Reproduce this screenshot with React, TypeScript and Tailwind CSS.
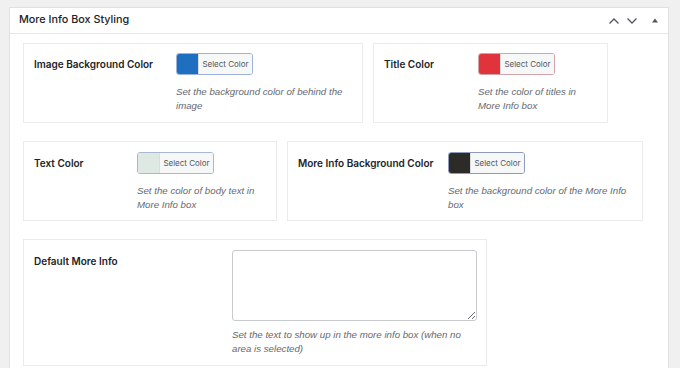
import React from "react";

const font = { fontFamily: "Inter, 'Helvetica Neue', Arial, sans-serif" };
const descFont = { fontFamily: "'Liberation Sans', Arial, sans-serif" };

function ColorButton({ color, border }: { color: string; border: string }) {
  return (
    <div
      className="flex h-[22px] w-[77px] overflow-hidden rounded-[3px] border"
      style={{ borderColor: border }}
    >
      <div className="w-[21px] h-full" style={{ backgroundColor: color }} />
      <div className="flex-1 flex items-center justify-center bg-[#f6f7f7] border-l border-[#dcdcde] text-[8px] text-[#50575e]">
        Select Color
      </div>
    </div>
  );
}

function Desc({ lines, mt = "mt-[10px]" }: { lines: string[]; mt?: string }) {
  return (
    <p
      className={`${mt} whitespace-nowrap text-[9.7px] leading-[14px] italic text-[#646970]`}
      style={descFont}
    >
      {lines.map((l, i) => (
        <span key={i} className="block">
          {l}
        </span>
      ))}
    </p>
  );
}

function ColorBox({
  width,
  labelW,
  label,
  color,
  border,
  lines,
  pt,
}: {
  width: number;
  labelW: number;
  label: string;
  color: string;
  border: string;
  lines: string[];
  pt: string;
}) {
  return (
    <div
      className={`flex h-[80px] border border-[#ebebeb] bg-white pl-[10px] pr-[9px] ${pt}`}
      style={{ width }}
    >
      <div
        className="shrink-0 text-[10px] font-semibold leading-[22px] text-[#1d2327]"
        style={{ width: labelW }}
      >
        {label}
      </div>
      <div className="flex-1 min-w-0">
        <ColorButton color={color} border={border} />
        <Desc lines={lines} />
      </div>
    </div>
  );
}

export default function App() {
  return (
    <div className="h-[368px] w-[680px] overflow-hidden bg-[#f0f0f1] pt-[7px] pl-[9px]" style={font}>
      <div className="w-[660px] h-[400px] border border-[#e0e0e0] bg-white">
        <div className="flex h-[26px] items-center justify-between border-b border-[#e8e8e8] pl-[9px] pr-[8px]">
          <span className="text-[10.8px] font-medium text-[#1d2327]">More Info Box Styling</span>
          <div className="flex items-center">
            <svg width="12" height="8" viewBox="0 0 12 8" className="mr-[6px]">
              <path d="M1.5 6.5 L6 2 L10.5 6.5" fill="none" stroke="#50575e" strokeWidth="1.3" />
            </svg>
            <svg width="12" height="8" viewBox="0 0 12 8" className="mr-[14px]">
              <path d="M1.5 1.5 L6 6 L10.5 1.5" fill="none" stroke="#50575e" strokeWidth="1.3" />
            </svg>
            <svg width="6" height="5" viewBox="0 0 6 5" className="mr-[2px]">
              <path d="M0 4.5 L3 0.5 L6 4.5 Z" fill="#50575e" />
            </svg>
          </div>
        </div>
        <div className="flex flex-wrap gap-x-[10px] gap-y-[18px] pt-[9px] pl-[13px] pr-[13px]">
          <ColorBox
            width={340}
            labelW={142}
            label="Image Background Color"
            color="#1e6fbf"
            border="#9db3dc"
            lines={["Set the background color of behind the", "image"]}
            pt="pt-[9px]"
          />
          <ColorBox
            width={235}
            labelW={94}
            label="Title Color"
            color="#e1333b"
            border="#d4a3aa"
            lines={["Set the color of titles in", "More Info box"]}
            pt="pt-[9px]"
          />
          <ColorBox
            width={254}
            labelW={103}
            label="Text Color"
            color="#dde9e2"
            border="#a9b8d2"
            lines={["Set the color of body text in", "More Info box"]}
            pt="pt-[10px]"
          />
          <ColorBox
            width={356}
            labelW={150}
            label="More Info Background Color"
            color="#2d2b27"
            border="#8e9bbb"
            lines={["Set the background color of the More Info", "box"]}
            pt="pt-[10px]"
          />
          <div className="flex h-[127px] w-[464px] border border-[#ebebeb] bg-white pl-[10px] pr-[9px] pt-[10px]">
            <div className="w-[198px] shrink-0 text-[10px] font-semibold leading-[22px] text-[#1d2327]">
              Default More Info
            </div>
            <div className="flex-1 min-w-0">
              <textarea className="block h-[71px] w-[245px] rounded-[3px] border border-[#c9cacd] bg-white outline-none" />
              <Desc
                mt="mt-[7px]"
                lines={["Set the text to show up in the more info box (when no", "area is selected)"]}
              />
            </div>
          </div>
        </div>
      </div>
    </div>
  );
}
